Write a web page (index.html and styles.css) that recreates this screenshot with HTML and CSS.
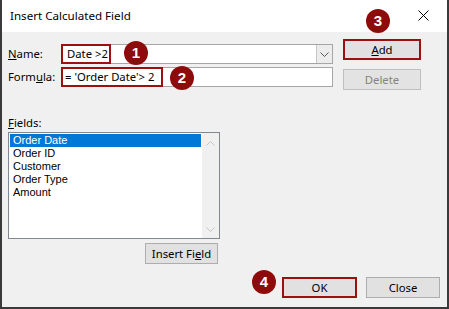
FILE: index.html
```html
<!DOCTYPE html>
<html>
<head>
<meta charset="utf-8">
<link rel="stylesheet" href="styles.css">
</head>
<body>
<div class="window">
  <div class="titlebar">
    <span class="title">Insert Calculated Field</span>
    <svg class="close" width="11" height="11" viewBox="0 0 11 11"><path d="M0.5 0.5 L10.5 10.5 M10.5 0.5 L0.5 10.5" stroke="#000" stroke-width="1" fill="none"/></svg>
  </div>
  <div class="body">
    <div class="top">
      <div class="form">
        <div class="row">
          <span class="lbl"><u>N</u>ame:</span>
          <div class="field combo">
            <span class="val name-val">Date &gt;2</span>
            <span class="drop"><svg width="9" height="5" viewBox="0 0 9 5"><path d="M0.5 0.5 L4.5 4.5 L8.5 0.5" stroke="#555" fill="none"/></svg></span>
            <span class="hl hl-name"></span>
          </div>
        </div>
        <div class="row">
          <span class="lbl">Form<u>u</u>la:</span>
          <div class="field">
            <span class="val formula-val">= 'Order Date'&gt; 2</span>
            <span class="hl hl-formula"></span>
          </div>
        </div>
      </div>
      <div class="buttons">
        <button class="btn btn-add marked"><u>A</u>dd</button>
        <button class="btn btn-del disabled">Delete</button>
      </div>
    </div>
    <div class="fields">
      <div class="fields-lbl"><u>F</u>ields:</div>
      <div class="list">
        <div class="items">
          <div class="item sel">Order Date</div>
          <div class="item">Order ID</div>
          <div class="item">Customer</div>
          <div class="item">Order Type</div>
          <div class="item">Amount</div>
        </div>
        <div class="scroll">
          <svg width="9" height="5" viewBox="0 0 9 5"><path d="M0.5 4.5 L4.5 0.5 L8.5 4.5" stroke="#c4c4c4" fill="none"/></svg>
          <svg width="9" height="5" viewBox="0 0 9 5"><path d="M0.5 0.5 L4.5 4.5 L8.5 0.5" stroke="#c4c4c4" fill="none"/></svg>
        </div>
      </div>
      <div class="insert-row">
        <button class="btn btn-insert">Insert Fi<u>e</u>ld</button>
      </div>
    </div>
    <div class="footer">
      <button class="btn btn-ok marked">OK</button>
      <button class="btn btn-close">Close</button>
    </div>
  </div>
  <span class="badge b1">1</span>
  <span class="badge b2">2</span>
  <span class="badge b3">3</span>
  <span class="badge b4">4</span>
</div>
</body>
</html>
```

FILE: styles.css
```css
html, body {
  margin: 0;
  padding: 0;
  background: #ffffff;
}
.window {
  position: relative;
  width: 449px;
  height: 309px;
  box-sizing: border-box;
  border-left: 2px solid #3a3a3a;
  border-right: 2px solid #3a3a3a;
  border-bottom: 2px solid #3a3a3a;
  font-family: "Noto Sans", "Open Sans", sans-serif;
  font-size: 11.3px;
  color: #000;
  display: flex;
  flex-direction: column;
}
.titlebar {
  height: 32px;
  background: #ffffff;
  display: flex;
  align-items: center;
  justify-content: space-between;
  padding-left: 8px;
  padding-right: 18px;
}
.title {
  font-size: 11.6px;
  line-height: 16px;
  margin-top: -1px;
}
.close {
  display: block;
  margin-top: -1px;
}
.body {
  flex: 1;
  background: #f0f0f0;
  padding: 0 7px 9px 6px;
  display: flex;
  flex-direction: column;
}
.top {
  display: flex;
  gap: 10px;
}
.form {
  padding-top: 12px;
  display: flex;
  flex-direction: column;
  gap: 3px;
}
.row {
  display: flex;
  align-items: center;
}
.lbl {
  width: 54px;
  line-height: 16px;
}
.field {
  position: relative;
  width: 271px;
  height: 20px;
  box-sizing: border-box;
  border: 1px solid #a6a6a6;
  background: #fff;
  display: flex;
  align-items: center;
}
.val {
  line-height: 16px;
  white-space: nowrap;
}
.name-val { padding-left: 4px; }
.formula-val { padding-left: 2px; }
.combo {
  justify-content: space-between;
}
.drop {
  width: 16px;
  height: 18px;
  box-sizing: border-box;
  border-left: 1px solid #c6c6c6;
  background: #ececec;
  display: flex;
  align-items: center;
  justify-content: center;
}
.drop svg { display: block; }
.hl {
  position: absolute;
  left: -2px;
  top: -1px;
  height: 20px;
  box-sizing: border-box;
  border: 2px solid #9b1111;
}
.hl-name { width: 50px; }
.hl-formula { width: 102px; }
.buttons {
  padding-top: 7px;
  display: flex;
  flex-direction: column;
  gap: 9px;
}
.btn {
  font-family: "Noto Sans", "Open Sans", sans-serif;
  font-size: 11.3px;
  line-height: 16px;
  color: #000;
  background: #e1e1e1;
  border: 1px solid #adadad;
  height: 21px;
  box-sizing: border-box;
  padding: 0;
  margin: 0;
  display: flex;
  align-items: center;
  justify-content: center;
}
.btn.marked {
  border: 2px solid #9b1111;
}
.btn-add, .btn-del { width: 78px; }
.btn.disabled {
  color: #838383;
  border-color: #bfbfbf;
  background: #e3e3e3;
}
.fields {
  margin-top: 25px;
  width: 212px;
  display: flex;
  flex-direction: column;
}
.fields-lbl {
  line-height: 16px;
  margin-bottom: 1px;
}
.list {
  height: 107px;
  box-sizing: border-box;
  border: 1px solid #828790;
  background: #fff;
  padding: 1px 0 0 1px;
  display: flex;
}
.items {
  flex: 1;
}
.item {
  height: 13px;
  line-height: 13px;
  font-family: "Liberation Sans", Arial, sans-serif;
  font-size: 11px;
  padding-left: 3px;
  margin-right: 1px;
  white-space: nowrap;
}
.item.sel {
  background: #0078d7;
  color: #fff;
}
.scroll {
  width: 17px;
  margin-top: -1px;
  background: #f0f0f0;
  display: flex;
  flex-direction: column;
  align-items: center;
  justify-content: space-between;
  padding: 8px 0 6px;
  box-sizing: border-box;
}
.scroll svg { display: block; }
.insert-row {
  display: flex;
  justify-content: flex-end;
  margin-top: 4px;
  padding-right: 2px;
}
.btn-insert { width: 73px; }
.footer {
  margin-top: 13px;
  display: flex;
  justify-content: flex-end;
  gap: 9px;
}
.btn-ok { width: 75px; }
.btn-close { width: 74px; }
.badge {
  position: absolute;
  width: 24px;
  height: 24px;
  border-radius: 50%;
  background: #8e0b0b;
  color: #fff;
  font-family: "Liberation Sans", Arial, sans-serif;
  font-weight: bold;
  font-size: 15px;
  line-height: 24px;
  text-align: center;
}
.b1 { left: 122px; top: 41px; }
.b2 { left: 168px; top: 66px; }
.b3 { left: 364px; top: 9px; }
.b4 { left: 250px; top: 270px; }
```
